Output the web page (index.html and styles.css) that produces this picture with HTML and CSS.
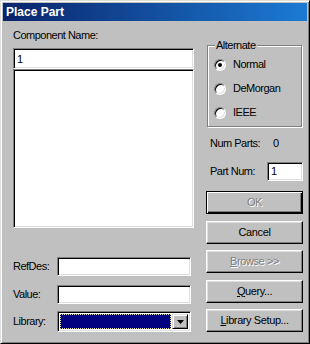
FILE: index.html
```html
<!DOCTYPE html>
<html lang="en">
<head>
  <meta charset="UTF-8">
  <title>Place Part</title>
  <link rel="stylesheet" href="styles.css">
</head>
<body>

  <div class="window">
    <div class="titlebar">Place Part</div>

    <div class="dialog">
      <div class="left">
        <div class="label">Component Name:</div>
        <div class="edit name-edit">1</div>
        <div class="listbox"></div>

        <div class="field-row first-row">
          <span class="label field-label">RefDes:</span>
          <div class="edit field-edit"></div>
        </div>
        <div class="field-row">
          <span class="label field-label">Value:</span>
          <div class="edit field-edit"></div>
        </div>
        <div class="field-row lib-row">
          <span class="label field-label">Library:</span>
          <div class="combo">
            <div class="combo-sel"></div>
            <div class="combo-btn">
              <svg width="7" height="4" viewBox="0 0 7 4"><path d="M0 0h7L3.5 4z" fill="#000"/></svg>
            </div>
          </div>
        </div>
      </div>

      <div class="right">
        <div class="group">
          <span class="legend">Alternate</span>
          <div class="radio-row"><span class="radio checked"></span>Normal</div>
          <div class="radio-row"><span class="radio"></span>DeMorgan</div>
          <div class="radio-row"><span class="radio"></span>IEEE</div>
        </div>

        <div class="info-row">
          <span class="label parts-label">Num Parts:</span>
          <span class="label">0</span>
        </div>
        <div class="info-row partnum-row">
          <span class="label partnum-label">Part Num:</span>
          <div class="edit small-edit">1</div>
        </div>

        <div class="buttons">
          <div class="btn default disabled">OK</div>
          <div class="btn">Cancel</div>
          <div class="btn disabled"><u>B</u>rowse &gt;&gt;</div>
          <div class="btn"><u>Q</u>uery...</div>
          <div class="btn"><u>L</u>ibrary Setup...</div>
        </div>
      </div>
    </div>
  </div>

</body>
</html>
```

FILE: styles.css
```css
body {
  margin: 0;
  font-family: "Liberation Sans", Arial, sans-serif;
  font-size: 11px;
  color: #000;
  background: #c0c0c0;
}
.window {
  box-sizing: border-box;
  width: 310px;
  height: 344px;
  padding: 2px;
  background: #c0c0c0;
  border: 1px solid;
  border-color: #dfdfdf #000 #000 #dfdfdf;
  box-shadow: inset 1px 1px #fff, inset -1px -1px #808080;
}
.titlebar {
  height: 18px;
  line-height: 18px;
  padding-left: 3px;
  color: #fff;
  font-weight: bold;
  font-size: 12px;
  background: linear-gradient(to right, #0a246a, #1c7ad4);
}
.dialog {
  display: flex;
  gap: 12px;
  padding: 8px 0 0 10px;
}
.label {
  line-height: 13px;
  letter-spacing: -0.5px;
}

/* sunken controls */
.edit, .listbox, .combo {
  box-sizing: border-box;
  background: #fff;
  border: 1px solid;
  border-color: #808080 #fff #fff #808080;
  box-shadow: inset 1px 1px #000, inset -1px -1px #dfdfdf;
}
.edit {
  padding: 3px 0 0 3px;
  line-height: 13px;
}

.left {
  width: 181px;
  display: flex;
  flex-direction: column;
}
.name-edit {
  margin-top: 6px;
  height: 21px;
  padding-top: 4px;
}
.listbox {
  height: 159px;
}
.field-row {
  display: flex;
  align-items: center;
  margin-top: 9px;
}
.first-row {
  margin-top: 29px;
}
.lib-row {
  margin-top: 7px;
}
.field-label {
  width: 44px;
}
.field-edit {
  width: 134px;
  height: 19px;
}
.combo {
  display: flex;
  width: 134px;
  height: 21px;
  padding: 2px;
  gap: 1px;
}
.combo-sel {
  flex: 1;
  background: #000080;
  border: 1px dotted #d8d890;
}
.combo-btn {
  box-sizing: border-box;
  width: 16px;
  display: flex;
  align-items: center;
  justify-content: center;
  background: #c0c0c0;
  border: 1px solid;
  border-color: #dfdfdf #000 #000 #dfdfdf;
  box-shadow: inset 1px 1px #fff, inset -1px -1px #808080;
}

.right {
  width: 97px;
  display: flex;
  flex-direction: column;
}
.group {
  position: relative;
  box-sizing: border-box;
  margin: 16px 1px 0 1px;
  height: 82px;
  padding: 12px 0 0 6px;
  border: 1px solid #808080;
  box-shadow: 1px 1px 0 #fff, inset 1px 1px 0 #fff;
  display: flex;
  flex-direction: column;
  gap: 11px;
}
.legend {
  position: absolute;
  top: -7px;
  left: 7px;
  padding: 0 1px;
  background: #c0c0c0;
  line-height: 13px;
  letter-spacing: -0.5px;
}
.radio-row {
  display: flex;
  align-items: center;
  gap: 7px;
  line-height: 13px;
  letter-spacing: -0.5px;
}
.radio {
  position: relative;
  box-sizing: border-box;
  width: 12px;
  height: 12px;
  border-radius: 50%;
  background: #fff;
  border: 1px solid;
  border-color: #808080 #fff #fff #808080;
  box-shadow: inset 1px 1px #000, inset -1px -1px #dfdfdf;
}
.radio.checked::after {
  content: "";
  position: absolute;
  left: 3px;
  top: 3px;
  width: 4px;
  height: 4px;
  border-radius: 50%;
  background: #000;
}
.info-row {
  display: flex;
  align-items: center;
  margin-top: 10px;
  padding-left: 4px;
}
.parts-label {
  width: 63px;
}
.partnum-row {
  margin-top: 12px;
}
.partnum-label {
  width: 57px;
}
.small-edit {
  width: 36px;
  height: 19px;
  padding-top: 2px;
}

.buttons {
  display: flex;
  flex-direction: column;
  gap: 6.5px;
  margin-top: 10px;
}
.btn {
  box-sizing: border-box;
  height: 23px;
  line-height: 21px;
  text-align: center;
  letter-spacing: -0.4px;
  border: 1px solid;
  border-color: #fff #000 #000 #fff;
  box-shadow: inset -1px -1px #808080, inset 1px 1px #dfdfdf;
}
.btn.default {
  border-color: #000;
  box-shadow: inset 1px 1px #fff, inset -1px -1px #000, inset -2px -2px #808080;
}
.btn.disabled {
  color: #808080;
  text-shadow: 1px 1px 0 #fff;
}
```
